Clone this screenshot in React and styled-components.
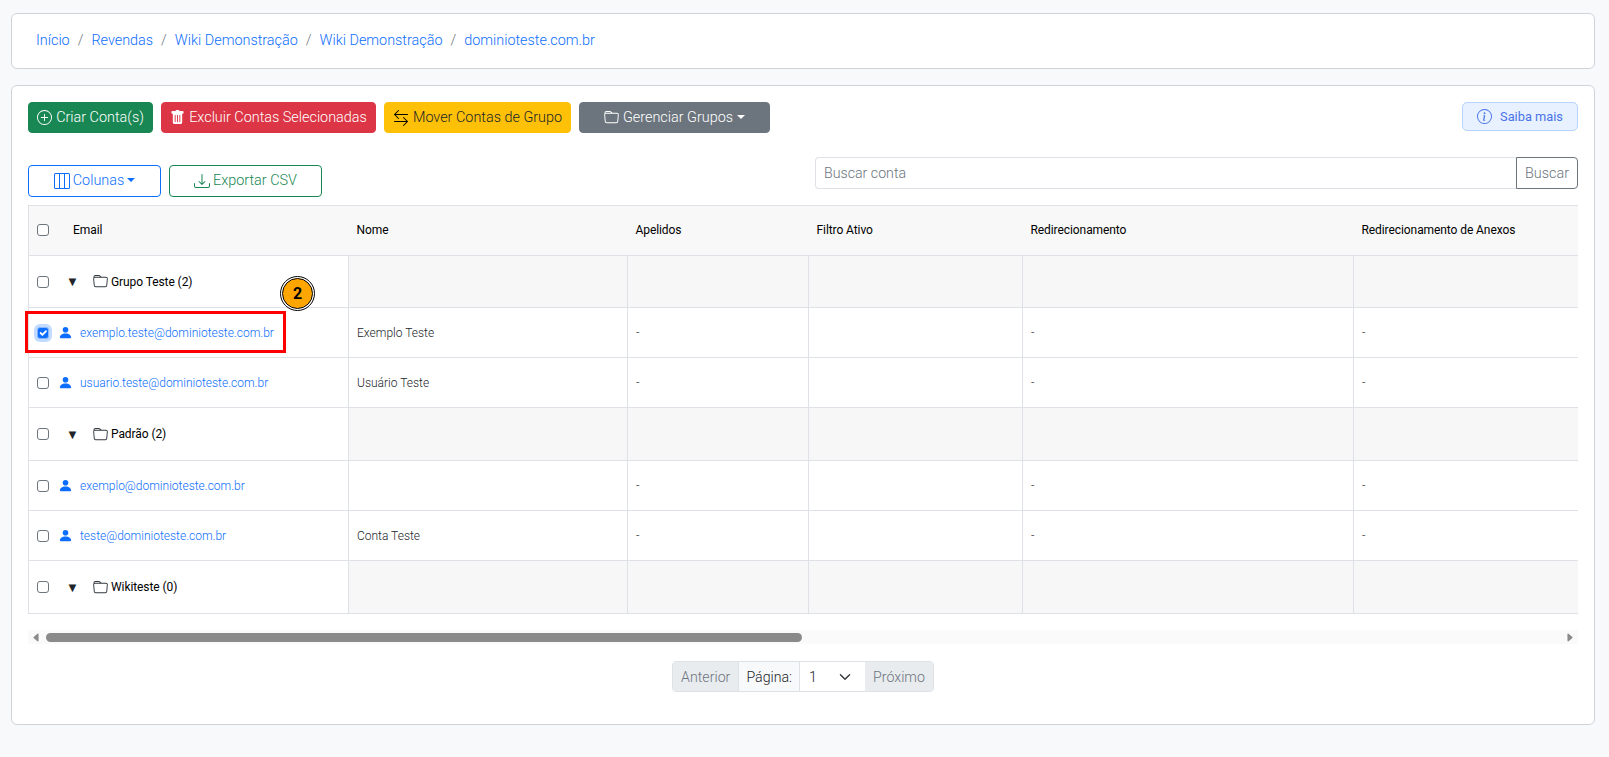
import React from "react";
import styled, { createGlobalStyle } from "styled-components";
import {
  BsPlusCircle, BsTrashFill, BsArrowLeftRight, BsFolder, BsLayoutThreeColumns,
  BsDownload, BsInfoCircle, BsPersonFill, BsChevronDown, BsCaretLeftFill, BsCaretRightFill,
} from "react-icons/bs";

const Global = createGlobalStyle`
  * { box-sizing: border-box; }
  html, body { margin: 0; padding: 0; background: #f8f9fa; }
  body { font-family: Roboto, "Liberation Sans", sans-serif; font-size: 14px; font-weight: 300; color: #212529; overflow: hidden; }
`;

const Page = styled.div`
  padding: 13px 14px 0 11px;
  height: 757px;
  display: flex;
  flex-direction: column;
  gap: 16px;
`;
const Card = styled.section`
  background: #fff;
  border: 1px solid #ced4da;
  border-radius: 6px;
`;
const BreadcrumbCard = styled(Card)`
  height: 56px;
  padding: 0 24px 2px;
  display: flex;
  align-items: center;
`;
const Crumbs = styled.nav`
  display: flex;
  align-items: center;
  font-size: 14.4px;
`;
const Crumb = styled.a`
  color: #0d6efd;
  &:not(:last-child)::after {
    content: "/";
    color: #6c757d;
    padding: 0 8px;
  }
`;
const MainCard = styled(Card)`
  height: 640px;
  padding: 16px;
`;
const ActionRow = styled.div`
  display: flex;
  align-items: flex-start;
  gap: 8px;
`;
const Button = styled.button`
  height: 31px;
  width: ${(p) => p.$w}px;
  padding: 0 0 1px;
  display: inline-flex;
  align-items: center;
  justify-content: center;
  gap: 4px;
  border-radius: 4px;
  border: 1px solid ${(p) => p.$bg};
  background: ${(p) => p.$bg};
  color: ${(p) => p.$fg || "#fff"};
  font: 300 14.4px Roboto, sans-serif;
  svg { font-size: ${(p) => p.$icon || 15}px; margin-top: 1px; color: ${(p) => p.$fg ? "#000" : "inherit"}; }
`;
const Caret = styled.span`
  width: 0;
  height: 0;
  border-top: 4px solid currentColor;
  border-left: 4px solid transparent;
  border-right: 4px solid transparent;
`;
const InfoButton = styled.button`
  margin-left: auto;
  width: 116px;
  height: 29px;
  display: inline-flex;
  align-items: center;
  justify-content: center;
  gap: 8px;
  background: #e7f1ff;
  border: 1px solid #b6d4fe;
  border-radius: 5px;
  color: #4a72e8;
  font: 400 12.8px Roboto, sans-serif;
  svg { font-size: 15px; }
`;
const ToolRow = styled.div`
  margin-top: 24px;
  height: 40px;
  display: flex;
  justify-content: space-between;
`;
const ToolLeft = styled.div`
  display: flex;
  align-items: flex-end;
  gap: 8px;
`;
const OutlineButton = styled.button`
  width: ${(p) => p.$w}px;
  height: 32px;
  padding: 0 0 2px;
  display: inline-flex;
  align-items: center;
  justify-content: center;
  gap: 3px;
  background: #fff;
  border: 1px solid ${(p) => p.$c};
  border-radius: 4px;
  color: ${(p) => p.$c};
  font: 300 14.4px Roboto, sans-serif;
  svg { font-size: 16px; margin-top: 2px; }
`;
const SearchGroup = styled.div`
  width: 763px;
  height: 32px;
  display: flex;
`;
const SearchInput = styled.input`
  flex: 1;
  min-width: 0;
  border: 1px solid #dee2e6;
  border-right: 0;
  border-radius: 4px 0 0 4px;
  padding: 0 8px;
  font: 300 14.2px Roboto, sans-serif;
  color: #212529;
  &::placeholder { color: #6c757d; }
`;
const SearchButton = styled.button`
  width: 62px;
  border: 1px solid #6c757d;
  border-radius: 0 4px 4px 0;
  background: #fff;
  color: #6c757d;
  font: 300 14.4px Roboto, sans-serif;
  padding: 0;
`;
const TableClip = styled.div`
  margin: 8px 0 0 -4px;
  padding-left: 4px;
  overflow: hidden;
`;
const Table = styled.table`
  border-collapse: collapse;
  table-layout: fixed;
  width: 1640px;
  font-size: 12px;
`;
const Th = styled.th`
  height: 50px;
  padding: 0 8px 2px;
  text-align: left;
  font-weight: 400;
  letter-spacing: -0.08px;
  color: #000;
  background: #f8f8f8;
  border-top: 1px solid #dee2e6;
  border-bottom: 1px solid #dee2e6;
  &:first-child { border-left: 1px solid #dee2e6; }
`;
const HeadSelect = styled.div`
  display: flex;
  align-items: center;
  gap: 24px;
`;
const GroupRow = styled.tr`
  height: 53px;
  &:first-child { height: 52px; }
`;
const AccountRow = styled.tr`
  height: 50px;
`;
const Td = styled.td`
  padding: 0 8px;
  border: 1px solid #dee2e6;
  color: #212529;
  background: ${(p) => (p.$muted ? "#f7f7f7" : "#fff")};
`;
const LeadCell = styled.div`
  position: relative;
  display: flex;
  align-items: center;
`;
const Check = styled.input.attrs({ type: "checkbox" })`
  appearance: none;
  flex: none;
  width: 12px;
  height: 12px;
  margin: 0;
  display: block;
  border: 1px solid #6c757d;
  border-radius: 3px;
  background: #fff;
  ${(p) => p.$on && `
    background: #0d6efd;
    border-color: #86b7fe;
    box-shadow: 0 0 0 3px #c2dbfe;
  `}
`;
const CheckWrap = styled.span`
  position: relative;
  display: block;
  flex: none;
  width: 12px;
  height: 12px;
`;
const CheckMark = styled.svg`
  position: absolute;
  inset: 0;
  width: 12px;
  height: 12px;
`;
const Triangle = styled.span`
  margin-left: 16px;
  width: 15px;
  display: flex;
  justify-content: center;
  color: #212529;
  font-family: "DejaVu Sans", sans-serif;
  font-size: 13px;
  line-height: 1;
`;
const GroupName = styled.span`
  margin-left: 13px;
  display: inline-flex;
  align-items: center;
  gap: 3px;
  color: #000;
  font-weight: 400;
  letter-spacing: -0.08px;
  svg { font-size: 15px; color: #343a40; }
`;
const AccountLink = styled.a`
  margin-left: 9px;
  display: inline-flex;
  align-items: center;
  gap: 7px;
  color: #0d6efd;
  white-space: nowrap;
  svg { font-size: 15px; color: #0d6efd; }
`;
const Highlight = styled.span`
  position: absolute;
  left: -12px;
  top: -14px;
  width: 261px;
  height: 42px;
  border: 3px solid #ff0000;
  pointer-events: none;
`;
const Badge = styled.span`
  position: absolute;
  left: 245px;
  top: -47px;
  width: 31px;
  height: 31px;
  border-radius: 50%;
  background: #ffa500;
  border: 1px solid #000;
  outline: 1px solid #000;
  outline-offset: 1px;
  box-shadow: 0 0 0 1px #fff;
  display: flex;
  align-items: center;
  justify-content: center;
  font-weight: 700;
  font-size: 16px;
  color: #000;
`;
const ScrollBar = styled.div`
  margin-top: 16px;
  height: 14px;
  padding: 0 3px;
  background: #fafafa;
  display: flex;
  align-items: center;
  color: #8a8a8a;
  svg { font-size: 11px; flex: none; }
`;
const ScrollTrack = styled.div`
  flex: 1;
  height: 9px;
  margin: 0 8px 0 4px;
`;
const ScrollThumb = styled.div`
  height: 100%;
  border-radius: 5px;
  background: #8a8a8a;
`;
const Pager = styled.div`
  margin-top: 17px;
  display: flex;
  justify-content: center;
`;
const PagerGroup = styled.div`
  height: 31px;
  display: flex;
  border: 1px solid #dee2e6;
  border-radius: 4px;
  overflow: hidden;
  font-size: 14.2px;
`;
const PagerNav = styled.span`
  padding: 0 8px;
  display: flex;
  align-items: center;
  background: #e9ecef;
  color: #6c757d;
`;
const PagerLabel = styled.span`
  padding: 0 7px;
  display: flex;
  align-items: center;
  background: #f8f9fa;
  color: #212529;
  border-left: 1px solid #dee2e6;
  border-right: 1px solid #dee2e6;
`;
const PagerSelect = styled.span`
  width: 65px;
  padding: 0 14px 0 9px;
  display: flex;
  align-items: center;
  justify-content: space-between;
  background: #fff;
  color: #212529;
  svg { font-size: 12px; stroke-width: 1; }
`;

const crumbs = ["Início", "Revendas", "Wiki Demonstração", "Wiki Demonstração", "dominioteste.com.br"];
const columns = [
  { label: "Nome", w: 279 },
  { label: "Apelidos", w: 181 },
  { label: "Filtro Ativo", w: 214 },
  { label: "Redirecionamento", w: 331 },
  { label: "Redirecionamento de Anexos", w: 316 },
];
const rows = [
  { group: "Grupo Teste (2)" },
  { email: "exemplo.teste@dominioteste.com.br", name: "Exemplo Teste", selected: true },
  { email: "usuario.teste@dominioteste.com.br", name: "Usuário Teste" },
  { group: "Padrão (2)" },
  { email: "exemplo@dominioteste.com.br", name: "" },
  { email: "teste@dominioteste.com.br", name: "Conta Teste" },
  { group: "Wikiteste (0)" },
];

export default function App() {
  return (
    <>
      <Global />
      <Page>
        <BreadcrumbCard>
          <Crumbs>
            {crumbs.map((c, i) => <Crumb key={i}>{c}</Crumb>)}
          </Crumbs>
        </BreadcrumbCard>
        <MainCard>
          <ActionRow>
            <Button $bg="#198754" $w={125}><BsPlusCircle />Criar Conta(s)</Button>
            <Button $bg="#dc3545" $w={215}><BsTrashFill />Excluir Contas Selecionadas</Button>
            <Button $bg="#ffc107" $fg="#212529" $w={187} $icon={16}><BsArrowLeftRight />Mover Contas de Grupo</Button>
            <Button $bg="#6c757d" $w={191}><BsFolder />Gerenciar Grupos<Caret /></Button>
            <InfoButton><BsInfoCircle />Saiba mais</InfoButton>
          </ActionRow>
          <ToolRow>
            <ToolLeft>
              <OutlineButton $c="#0d6efd" $w={133}><BsLayoutThreeColumns />Colunas<Caret /></OutlineButton>
              <OutlineButton $c="#198754" $w={153}><BsDownload />Exportar CSV</OutlineButton>
            </ToolLeft>
            <SearchGroup>
              <SearchInput placeholder="Buscar conta" />
              <SearchButton>Buscar</SearchButton>
            </SearchGroup>
          </ToolRow>
          <TableClip>
            <Table>
              <colgroup>
                <col style={{ width: 320 }} />
                {columns.map((c) => <col key={c.label} style={{ width: c.w }} />)}
              </colgroup>
              <thead>
                <tr>
                  <Th><HeadSelect><Check />Email</HeadSelect></Th>
                  {columns.map((c) => <Th key={c.label}>{c.label}</Th>)}
                </tr>
              </thead>
              <tbody>
                {rows.map((r, i) => r.group ? (
                  <GroupRow key={i}>
                    <Td>
                      <LeadCell>
                        <Check />
                        <Triangle>▼</Triangle>
                        <GroupName><BsFolder />{r.group}</GroupName>
                      </LeadCell>
                    </Td>
                    {columns.map((c) => <Td key={c.label} $muted />)}
                  </GroupRow>
                ) : (
                  <AccountRow key={i}>
                    <Td>
                      <LeadCell>
                        <CheckWrap>
                          <Check $on={r.selected} checked={!!r.selected} readOnly />
                          {r.selected && (
                            <CheckMark viewBox="0 0 20 20">
                              <path fill="none" stroke="#fff" strokeLinecap="round" strokeLinejoin="round" strokeWidth="3" d="M6 10l3 3 6-6" />
                            </CheckMark>
                          )}
                        </CheckWrap>
                        <AccountLink><BsPersonFill />{r.email}</AccountLink>
                        {r.selected && <Highlight />}
                        {r.selected && <Badge>2</Badge>}
                      </LeadCell>
                    </Td>
                    <Td>{r.name}</Td>
                    <Td>-</Td>
                    <Td />
                    <Td>-</Td>
                    <Td>-</Td>
                  </AccountRow>
                ))}
              </tbody>
            </Table>
          </TableClip>
          <ScrollBar>
            <BsCaretLeftFill />
            <ScrollTrack><ScrollThumb style={{ width: 756 }} /></ScrollTrack>
            <BsCaretRightFill />
          </ScrollBar>
          <Pager>
            <PagerGroup>
              <PagerNav>Anterior</PagerNav>
              <PagerLabel>Página:</PagerLabel>
              <PagerSelect>1<BsChevronDown /></PagerSelect>
              <PagerNav>Próximo</PagerNav>
            </PagerGroup>
          </Pager>
        </MainCard>
      </Page>
    </>
  );
}
